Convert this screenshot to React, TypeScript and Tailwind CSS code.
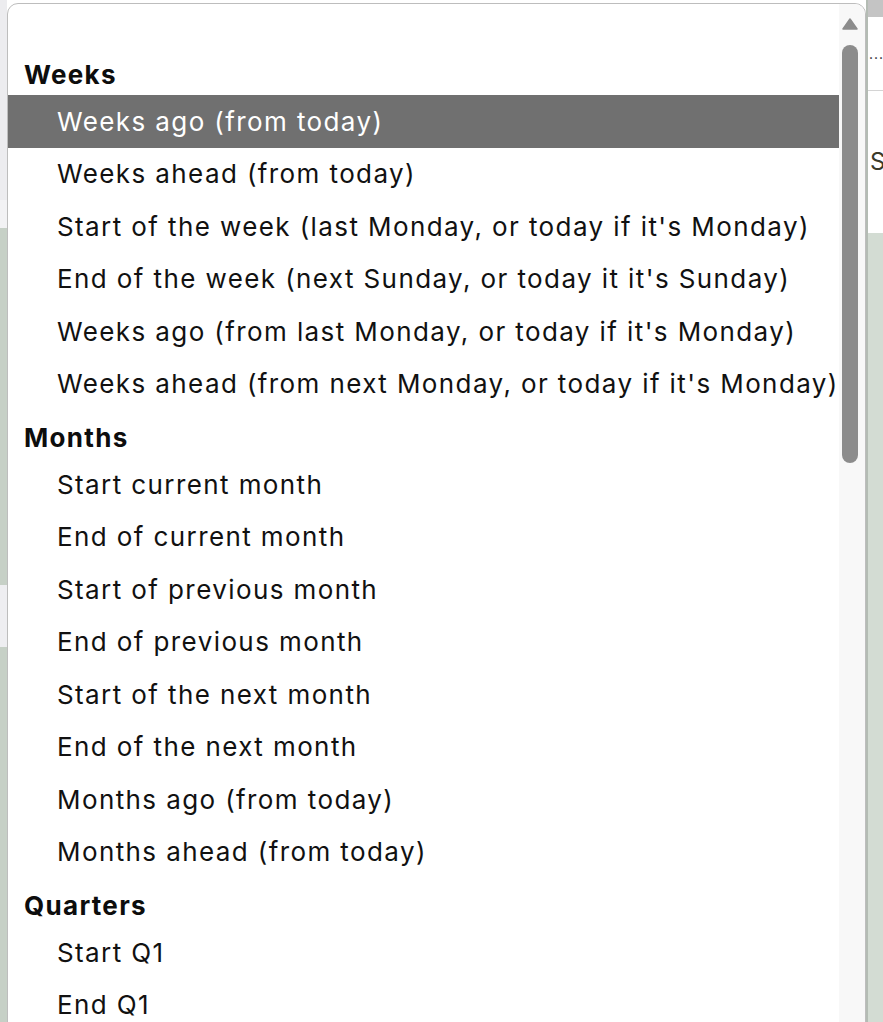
import React from "react";

type Group = { title: string; items: string[] };

const groups: Group[] = [
  {
    title: "Weeks",
    items: [
      "Weeks ago (from today)",
      "Weeks ahead (from today)",
      "Start of the week (last Monday, or today if it's Monday)",
      "End of the week (next Sunday, or today it it's Sunday)",
      "Weeks ago (from last Monday, or today if it's Monday)",
      "Weeks ahead (from next Monday, or today if it's Monday)",
    ],
  },
  {
    title: "Months",
    items: [
      "Start current month",
      "End of current month",
      "Start of previous month",
      "End of previous month",
      "Start of the next month",
      "End of the next month",
      "Months ago (from today)",
      "Months ahead (from today)",
    ],
  },
  {
    title: "Quarters",
    items: ["Start Q1", "End Q1", "Start Q2", "End Q2"],
  },
];

const selected = "Weeks ago (from today)";

export default function App() {
  return (
    <div className="relative w-[883px] h-[1022px] overflow-hidden bg-[#f4f4f4] font-['Inter','Noto_Sans',sans-serif]">
      {/* page behind the menu */}
      <div className="flex h-full">
        <div className="w-[7px] flex flex-col">
          <div className="h-[200px] bg-[#ececef]" />
          <div className="h-[28px] bg-[#f2f2f4]" />
          <div className="h-[357px] bg-[#c6d0c6]" />
          <div className="h-[62px] bg-[#eeeef1]" />
          <div className="flex-1 bg-[#c6d0c6]" />
        </div>
        <div className="flex-1 bg-white" />
        <div className="w-[17px] flex flex-col border-l-2 border-[#b4bcb4]">
          <div className="h-[17px] bg-[#c4c4c4]" />
          <div className="h-[73px] bg-white flex items-center text-[14px] leading-none text-[#222] tracking-[1px] pl-[1px]">
            ...
          </div>
          <div className="h-[143px] bg-white border-t border-[#d4d4d4] flex items-center text-[24px] text-[#3a3a2a] pl-[2px]">
            S
          </div>
          <div className="flex-1 bg-[#d3dcd3]" />
        </div>
      </div>

      {/* dropdown menu */}
      <div className="absolute left-[7px] top-[3px] w-[859px] h-[1040px] bg-white border border-[#bdbdbd] rounded-t-[11px] flex overflow-hidden">
        <div className="flex-1 pt-[43px]">
          {groups.map((g) => (
            <div key={g.title}>
              <div className="h-[48px] pt-[6px] flex items-center pl-[16px] text-[26px] tracking-[1.3px] font-bold text-[#0d0d0d]">
                {g.title}
              </div>
              {g.items.map((item) => (
                <div
                  key={item}
                  className={
                    item === selected
                      ? "h-[52.5px] flex items-center pl-[49px] text-[26px] tracking-[1.4px] text-white bg-[#707070] whitespace-nowrap"
                      : "h-[52.5px] flex items-center pl-[49px] text-[26px] tracking-[1.4px] text-[#111] whitespace-nowrap"
                  }
                >
                  {item}
                </div>
              ))}
            </div>
          ))}
        </div>
        <div className="w-[26px] bg-[#f8f8f8] flex flex-col items-center pt-[14px]">
          <svg width="16" height="12" viewBox="0 0 16 12" className="mr-[4px]">
            <path d="M8 1 L15 11 L1 11 Z" fill="#8c8c8c" strokeLinejoin="round" stroke="#8c8c8c" strokeWidth="1.5" />
          </svg>
          <div className="mt-[15px] w-[16px] h-[418px] rounded-full bg-[#8c8c8c] mr-[4px]" />
        </div>
      </div>
    </div>
  );
}
